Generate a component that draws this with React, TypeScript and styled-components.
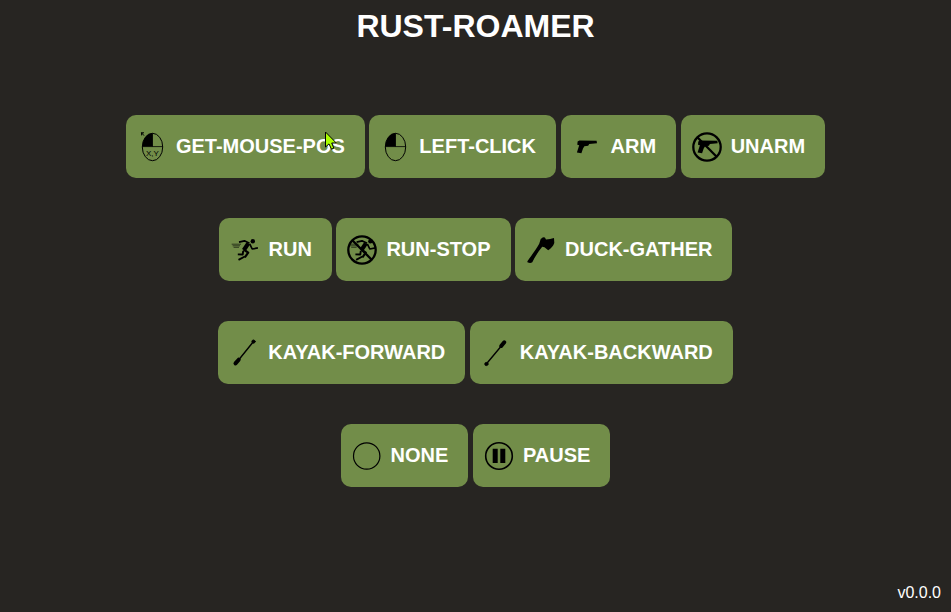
import React from "react";
import styled, { createGlobalStyle } from "styled-components";

const GlobalStyle = createGlobalStyle`
  body {
    margin: 0;
    background: #272522;
    overflow: hidden;
  }
`;

const Page = styled.main`
  display: flex;
  flex-direction: column;
  align-items: center;
  box-sizing: border-box;
  height: 612px;
  padding: 8px 10px 10px;
  color: #fff;
  font-family: "Liberation Sans", Arial, sans-serif;
`;

const Title = styled.h1`
  margin: 0 0 70px;
  font-size: 32px;
  line-height: 37px;
  font-weight: 700;
`;

const Rows = styled.div`
  display: flex;
  flex-direction: column;
  align-items: center;
  gap: 40px;
`;

const Row = styled.div`
  display: flex;
  gap: 4.55px;
`;

const ActionButton = styled.button`
  display: flex;
  align-items: center;
  gap: 9px;
  height: 63px;
  padding: 0 20px 0 11px;
  border: 0;
  border-radius: 10px;
  background: #728d49;
  color: #fff;
  font: 700 20px/23px "Liberation Sans", Arial, sans-serif;
  white-space: nowrap;
`;

const Label = styled.span`
  position: relative;
  display: block;
  margin-top: -1px;
`;

const Icon = styled.svg`
  display: block;
  flex: none;
  width: 30px;
  height: 30px;
  margin-top: 1px;
  overflow: visible;
`;

const Coordinates = styled.text`
  font: 400 8px "Liberation Sans", Arial, sans-serif;
`;

const Pointer = styled.svg`
  position: absolute;
  left: 149px;
  top: -4px;
  width: 12px;
  height: 19px;
`;

const Version = styled.footer`
  align-self: flex-end;
  margin-top: auto;
  font-size: 16px;
  line-height: 18px;
`;

const MouseShape = () => (
  <>
    <path d="M15.5 1.2C9.8 1.2 5.4 7.2 5.4 14.6H15.5Z" fill="#000" />
    <ellipse cx="15.5" cy="15" rx="10.2" ry="13.7" fill="none" stroke="#000" />
    <path d="M5.4 14.6H25.6M15.5 1.3V14.6" stroke="#000" strokeWidth="0.8" />
  </>
);

const GunShape = () => (
  <path d="M5.6 9.4 7.4 8.4 24.6 8.7 25 11.3 17.2 11.9 16.2 13.8 12.4 14.2 11 16.4 9.4 21.2 4.9 20.4 7.2 13.2 5.3 12.7Z" />
);

const RunnerShape = () => (
  <>
    <path d="M1.7 9.2H11M2.6 10.8H10M3.6 12.3H9" stroke="#26301a" strokeWidth="0.9" />
    <circle cx="22.8" cy="6.3" r="2.2" />
    <g fill="none" stroke="#000" strokeLinejoin="round">
      <path d="M9 7.1 14.4 5.8 19.5 8.2" strokeWidth="1.7" />
      <path d="M18.3 8.3 13.8 15.2" strokeWidth="4.2" />
      <path d="M19.7 8.8 22.2 14 27.9 12.9" strokeWidth="1.7" />
      <path d="M13.6 14.5 18.2 17.7 14.8 22.3" strokeWidth="2.2" />
      <path d="M13.2 15.8 12.7 19.5 7.8 19.4M14.8 21.5 8.5 24.9" strokeWidth="1.9" />
    </g>
  </>
);

const BanShape = () => (
  <g fill="none" stroke="#000" strokeWidth="2.3">
    <circle cx="15" cy="15" r="13.7" />
    <path d="M5.3 5.3 24.7 24.7" />
  </g>
);

const icons = {
  position: (
    <>
      <MouseShape />
      <path d="M4.2.8H7M4.6.6V3.4M4.5.8 7 3.6" stroke="#000" strokeWidth="1" fill="none" />
      <Coordinates x="15.4" y="23.7" textAnchor="middle">X,Y</Coordinates>
    </>
  ),
  click: <MouseShape />,
  arm: <GunShape />,
  unarm: <><g transform="translate(.7 0)"><GunShape /></g><BanShape /></>,
  run: <RunnerShape />,
  stop: <><g transform="translate(.6 0)"><RunnerShape /></g><BanShape /></>,
  axe: (
    <path d="M1.4 26.2C5.8 20 10.2 14.5 13.2 8.8L14.7 4 17 2.3 18.9 2.6 20 4.4C23 4.4 25.3 3.9 28 3L28.3 8C27.2 11.2 25.2 13.3 22.2 15.2L18.5 12.3 16.2 11.7C12.2 16.6 9 21.8 6.3 27.3Q4.3 28.6 1.4 27.3Z" />
  ),
  paddleDown: (
    <g stroke="#000" strokeLinecap="round">
      <path d="M8 24 24.5 3.5" strokeWidth="1.4" />
      <circle cx="24.5" cy="3.6" r="1.6" />
      <path d="M6.5 25.4 9.7 21.7" strokeWidth="4" />
    </g>
  ),
  paddleUp: (
    <g stroke="#000" strokeLinecap="round">
      <path d="M5.3 26 22 6" strokeWidth="1.4" />
      <circle cx="5.4" cy="26" r="1.6" />
      <path d="M20.2 8 23.3 4.3" strokeWidth="4" />
    </g>
  ),
  none: <circle cx="14.7" cy="15" r="13.2" fill="none" stroke="#000" strokeWidth="1.2" />,
  pause: (
    <>
      <circle cx="15" cy="15" r="13.3" fill="none" stroke="#000" strokeWidth="1.6" />
      <path d="M8.7 7.8h5V22h-5ZM16.3 7.8h5V22h-5Z" />
    </>
  ),
};

type Action = { label: string; icon: keyof typeof icons; hovered?: boolean };

const actionRows: Action[][] = [
  [
    { label: "GET-MOUSE-POS", icon: "position", hovered: true },
    { label: "LEFT-CLICK", icon: "click" },
    { label: "ARM", icon: "arm" },
    { label: "UNARM", icon: "unarm" },
  ],
  [
    { label: "RUN", icon: "run" },
    { label: "RUN-STOP", icon: "stop" },
    { label: "DUCK-GATHER", icon: "axe" },
  ],
  [
    { label: "KAYAK-FORWARD", icon: "paddleDown" },
    { label: "KAYAK-BACKWARD", icon: "paddleUp" },
  ],
  [
    { label: "NONE", icon: "none" },
    { label: "PAUSE", icon: "pause" },
  ],
];

export default function App() {
  return (
    <>
      <GlobalStyle />
      <Page>
        <Title>RUST-ROAMER</Title>
        <Rows>
          {actionRows.map((row, index) => (
            <Row key={index}>
              {row.map(({ label, icon, hovered }) => (
                <ActionButton key={label}>
                  <Icon viewBox="0 0 30 30" aria-hidden="true">{icons[icon]}</Icon>
                  <Label>
                    {label}
                    {hovered && (
                      <Pointer viewBox="0 0 12 19" aria-hidden="true">
                        <path
                          d="M.5 1V16L4 12.9 6.5 18.2 8.8 17.1 6.7 12H11.3Z"
                          fill="#aaff00"
                          stroke="#000"
                        />
                      </Pointer>
                    )}
                  </Label>
                </ActionButton>
              ))}
            </Row>
          ))}
        </Rows>
        <Version>v0.0.0</Version>
      </Page>
    </>
  );
}
